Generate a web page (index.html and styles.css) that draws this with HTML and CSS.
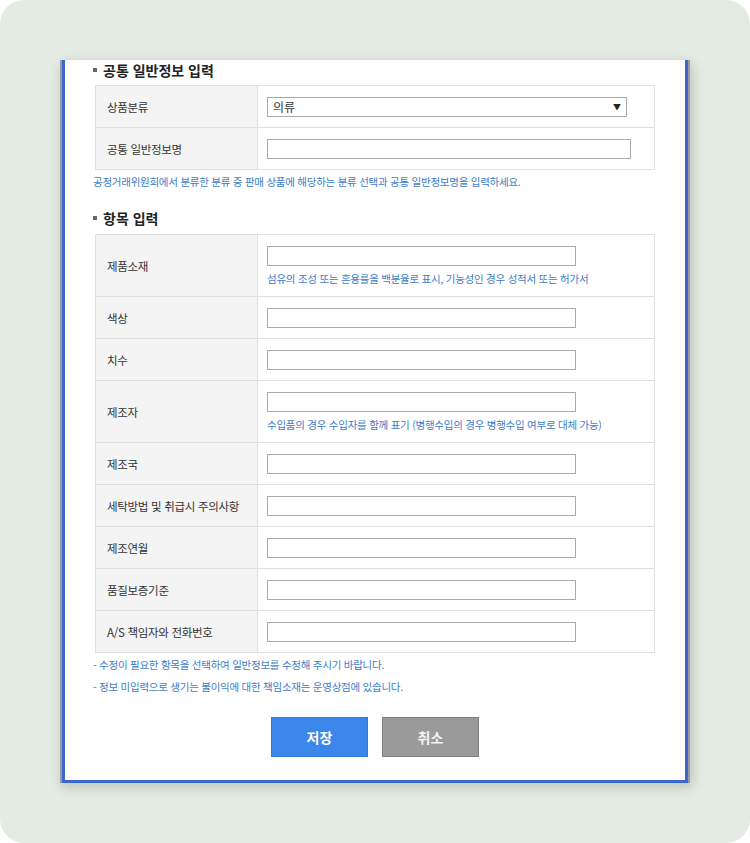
FILE: index.html
```html
<!DOCTYPE html>
<html lang="ko">
<head>
    <meta charset="UTF-8">
    <meta name="viewport" content="width=device-width, initial-scale=1.0">
    <title>일반정보 입력</title>
    <link rel="stylesheet" href="styles.css">
</head>
<body>
    <div class="frame">
        <div class="dialog-edge">
            <div class="dialog">
                <h3 class="section-title"><span class="bullet"></span>공통 일반정보 입력</h3>
                <table class="info-table">
                    <tr>
                        <th>상품분류</th>
                        <td>
                            <div class="select">의류<span class="arrow">▼</span></div>
                        </td>
                    </tr>
                    <tr>
                        <th>공통 일반정보명</th>
                        <td><input type="text" class="input wide"></td>
                    </tr>
                </table>
                <p class="guide">공정거래위원회에서 분류한 분류 중 판매 상품에 해당하는 분류 선택과 공통 일반정보명을 입력하세요.</p>

                <h3 class="section-title second"><span class="bullet"></span>항목 입력</h3>
                <table class="info-table items">
                    <tr class="tall">
                        <th>제품소재</th>
                        <td>
                            <input type="text" class="input">
                            <p class="hint">섬유의 조성 또는 혼용률을 백분율로 표시, 기능성인 경우 성적서 또는 허가서</p>
                        </td>
                    </tr>
                    <tr>
                        <th>색상</th>
                        <td><input type="text" class="input"></td>
                    </tr>
                    <tr>
                        <th>치수</th>
                        <td><input type="text" class="input"></td>
                    </tr>
                    <tr class="tall">
                        <th>제조자</th>
                        <td>
                            <input type="text" class="input">
                            <p class="hint">수입품의 경우 수입자를 함께 표기 (병행수입의 경우 병행수입 여부로 대체 가능)</p>
                        </td>
                    </tr>
                    <tr>
                        <th>제조국</th>
                        <td><input type="text" class="input"></td>
                    </tr>
                    <tr>
                        <th>세탁방법 및 취급시 주의사항</th>
                        <td><input type="text" class="input"></td>
                    </tr>
                    <tr>
                        <th>제조연월</th>
                        <td><input type="text" class="input"></td>
                    </tr>
                    <tr>
                        <th>품질보증기준</th>
                        <td><input type="text" class="input"></td>
                    </tr>
                    <tr>
                        <th>A/S 책임자와 전화번호</th>
                        <td><input type="text" class="input"></td>
                    </tr>
                </table>
                <ul class="notes">
                    <li>- 수정이 필요한 항목을 선택하여 일반정보를 수정해 주시기 바랍니다.</li>
                    <li>- 정보 미입력으로 생기는 불이익에 대한 책임소재는 운영상점에 있습니다.</li>
                </ul>
                <div class="buttons">
                    <button class="btn save">저장</button>
                    <button class="btn cancel">취소</button>
                </div>
            </div>
        </div>
    </div>
</body>
</html>
```

FILE: styles.css
```css
body {
    margin: 0;
    background: #ffffff;
    font-family: "Noto Sans CJK KR", "Noto Sans", sans-serif;
}

.frame {
    height: 843px;
    box-sizing: border-box;
    padding: 60px 0 0 60px;
    background-color: #e3ebe2;
    border-radius: 24px;
}

.dialog-edge {
    width: 630px;
    padding: 0 2px;
    box-sizing: border-box;
    background-color: #959ea8;
    box-shadow: 2px 4px 12px rgba(0, 0, 0, 0.18);
}

.dialog {
    background-color: #fff;
    border: 3px solid #3c67cc;
    border-top: none;
    padding: 0 30px 23px 30px;
}

.section-title {
    margin: 0;
    margin-left: -2px;
    font-size: 14px;
    line-height: 20px;
    font-weight: bold;
    color: #222;
    display: flex;
    align-items: center;
}

.section-title.second {
    margin-top: 18px;
}

.bullet {
    width: 4px;
    height: 4px;
    background-color: #666;
    margin-right: 6px;
}

.info-table {
    width: 560px;
    margin-top: 5px;
    border-collapse: collapse;
    table-layout: fixed;
}

.info-table.items {
    margin-top: 6px;
}

.info-table th,
.info-table td {
    border: 1px solid #e0e0e0;
    height: 41px;
    padding: 0 0 0 9px;
    vertical-align: middle;
}

.info-table th {
    width: 150px;
    padding-left: 11px;
    background-color: #f4f4f4;
    font-size: 11.5px;
    letter-spacing: -0.3px;
    font-weight: normal;
    color: #333;
    text-align: left;
}

.info-table tr.tall th,
.info-table tr.tall td {
    height: 61px;
}

.input {
    display: block;
    width: 309px;
    height: 20px;
    box-sizing: border-box;
    border: 1px solid #aaa;
    margin: 0;
    padding: 0 4px;
}

.input.wide {
    width: 364px;
}

.select {
    width: 360px;
    height: 20px;
    box-sizing: border-box;
    border: 1px solid #a9a9a9;
    font-size: 12px;
    line-height: 18px;
    padding: 0 5px;
    color: #333;
    display: flex;
    justify-content: space-between;
}

.arrow {
    font-size: 8px;
    color: #222;
}

.hint {
    margin: 6px 0 0 0;
    font-size: 10.5px;
    line-height: 14px;
    color: #3d7cc9;
    letter-spacing: -0.25px;
}

.guide {
    margin: 4px 0 0 -2px;
    font-size: 10.5px;
    line-height: 16px;
    color: #3d7cc9;
    letter-spacing: -0.25px;
}

.notes {
    list-style-type: none;
    margin: 1px 0 0 -2px;
    padding: 0;
}

.notes li {
    font-size: 10.5px;
    line-height: 22px;
    color: #3d7cc9;
    letter-spacing: -0.25px;
}

.buttons {
    margin-top: 19px;
    display: flex;
    justify-content: center;
    gap: 14px;
}

.btn {
    width: 97px;
    height: 40px;
    font-family: inherit;
    font-size: 14px;
    font-weight: bold;
    color: #fff;
    cursor: pointer;
}

.save {
    background-color: #3b86ea;
    border: 1px solid #3479d6;
}

.cancel {
    background-color: #9a9a9a;
    border: 1px solid #7f7f7f;
    color: #f2f2f2;
}
```
